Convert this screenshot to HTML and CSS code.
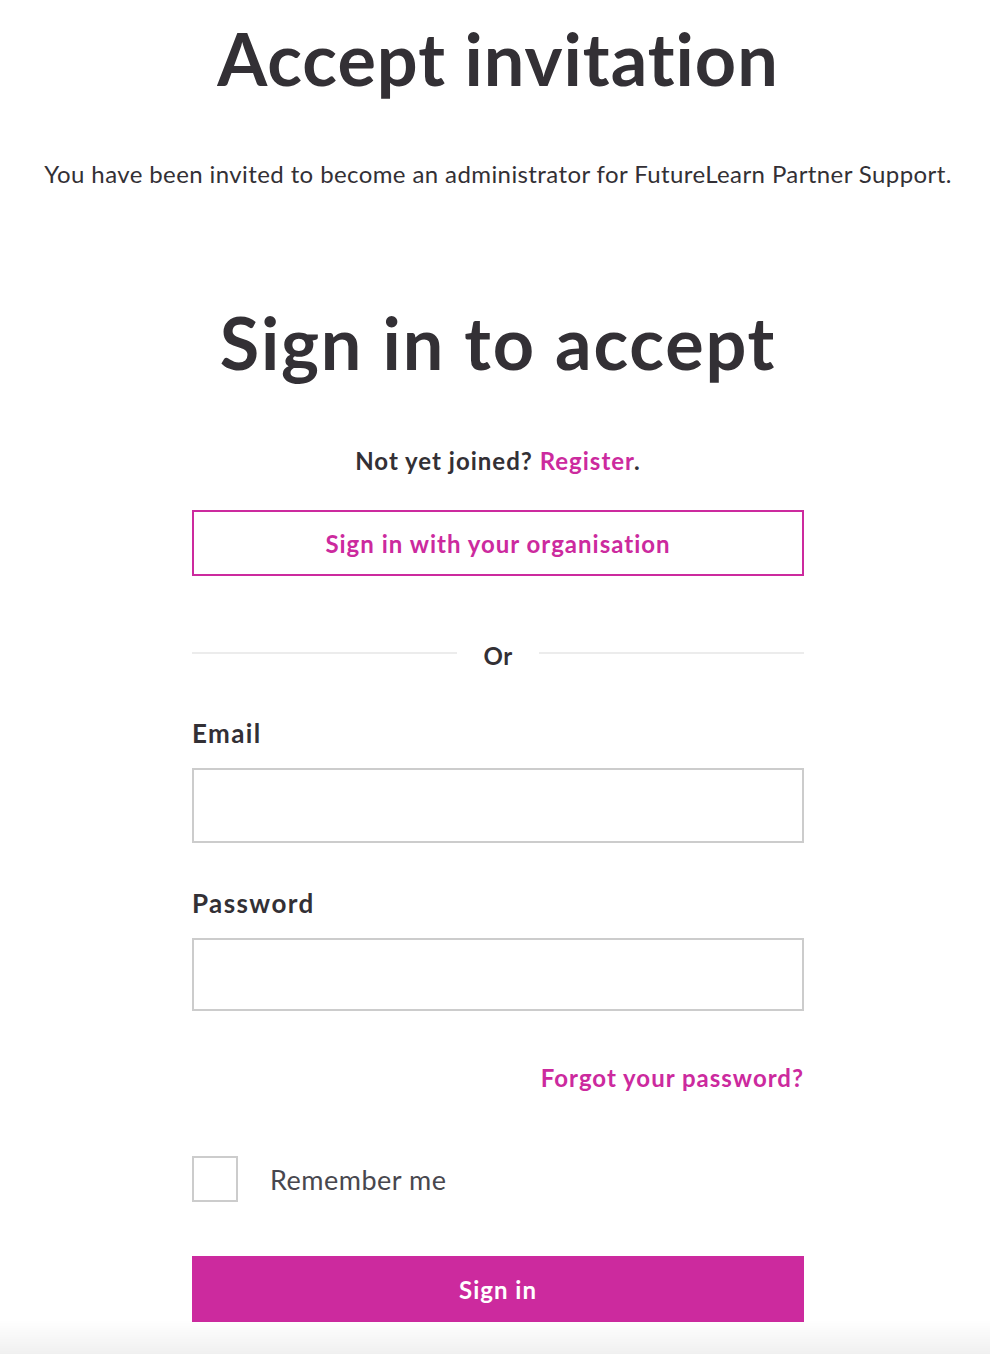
FILE: index.html
```html
<!DOCTYPE html>
<html lang="en">
<head>
<meta charset="utf-8">
<title>Accept invitation</title>
<link rel="stylesheet" href="styles.css">
</head>
<body>
<main class="page">
  <h1 class="title">Accept invitation</h1>
  <p class="intro">You have been invited to become an administrator for FutureLearn Partner Support.</p>

  <section class="signin">
    <h2 class="title title-sub">Sign in to accept</h2>
    <p class="join">Not yet joined? <a class="link" href="#">Register</a>.</p>
    <a class="btn btn-outline" href="#">Sign in with your organisation</a>

    <div class="divider"><span class="divider-line"></span><span class="divider-text">Or</span><span class="divider-line"></span></div>

    <form class="form">
      <label class="label" for="email">Email</label>
      <input class="input input-email" id="email" type="email">
      <label class="label label-pass" for="password">Password</label>
      <input class="input input-pass" id="password" type="password">
      <div class="forgot-row"><a class="link forgot" href="#">Forgot your password?</a></div>
      <label class="remember"><span class="checkbox"></span><span class="remember-text">Remember me</span></label>
      <button class="btn btn-solid" type="button">Sign in</button>
    </form>
  </section>
</main>
<div class="bottom-shade"></div>
</body>
</html>
```
FILE: styles.css
```css
html, body {
  margin: 0;
  padding: 0;
  background: #ffffff;
}
body {
  font-family: Lato, "Open Sans", sans-serif;
  color: #333035;
}
.page {
  padding-left: 6px;
  display: flex;
  flex-direction: column;
  align-items: center;
}
.title {
  margin: 0;
  font-size: 72px;
  font-weight: 700;
  line-height: 1;
  letter-spacing: 1px;
  text-align: center;
  padding-top: 22px;
}
.intro {
  margin: 64px 0 0;
  font-size: 24px;
  line-height: 32px;
  letter-spacing: 0.4px;
  text-align: center;
}
.signin {
  width: 612px;
  display: flex;
  flex-direction: column;
}
.title-sub {
  padding-top: 0;
  margin-top: 116px;
  letter-spacing: 1.8px;
}
.join {
  margin: 68px 0 0;
  font-size: 24px;
  font-weight: 700;
  line-height: 30px;
  letter-spacing: 1px;
  text-align: center;
}
.link {
  color: #cc2a9e;
  text-decoration: none;
}
.btn {
  box-sizing: border-box;
  width: 612px;
  height: 66px;
  display: flex;
  align-items: center;
  justify-content: center;
  font-family: Lato, "Open Sans", sans-serif;
  font-size: 24px;
  font-weight: 700;
  letter-spacing: 1px;
  text-decoration: none;
}
.btn-outline {
  margin-top: 34px;
  border: 2px solid #cc2a9e;
  color: #cc2a9e;
}
.divider {
  margin-top: 59px;
  display: flex;
  align-items: center;
  gap: 26px;
}
.divider-line {
  flex: 1;
  height: 2px;
  background: #ececec;
}
.divider-text {
  font-size: 24px;
  font-weight: 700;
  line-height: 30px;
  letter-spacing: 0.5px;
  padding-top: 6px;
}
.form {
  display: flex;
  flex-direction: column;
  margin-top: 46px;
}
.label {
  font-size: 26px;
  font-weight: 700;
  line-height: 32px;
  letter-spacing: 1.4px;
}
.input {
  box-sizing: border-box;
  width: 612px;
  height: 75px;
  border: 2px solid #cccccc;
  border-radius: 0;
  margin: 0;
  background: #fff;
  outline: none;
}
.input-email {
  margin-top: 19px;
}
.label-pass {
  margin-top: 44px;
}
.input-pass {
  margin-top: 19px;
  height: 73px;
}
.forgot-row {
  display: flex;
  justify-content: flex-end;
  margin-top: 52px;
}
.forgot {
  font-size: 24px;
  font-weight: 700;
  line-height: 30px;
  letter-spacing: 1px;
}
.remember {
  display: flex;
  align-items: center;
  gap: 32px;
  margin-top: 63px;
}
.checkbox {
  box-sizing: border-box;
  width: 46px;
  height: 46px;
  border: 2px solid #cccccc;
}
.remember-text {
  font-size: 27px;
  font-weight: 400;
  letter-spacing: 0.5px;
  color: #48474e;
}
.btn-solid {
  margin-top: 54px;
  border: 0;
  background: #cc2a9e;
  color: #ffffff;
  cursor: pointer;
}
.bottom-shade {
  position: fixed;
  left: 0;
  right: 0;
  bottom: 0;
  height: 34px;
  background: linear-gradient(to bottom, rgba(0,0,0,0), rgba(0,0,0,0.06));
  pointer-events: none;
}
```
